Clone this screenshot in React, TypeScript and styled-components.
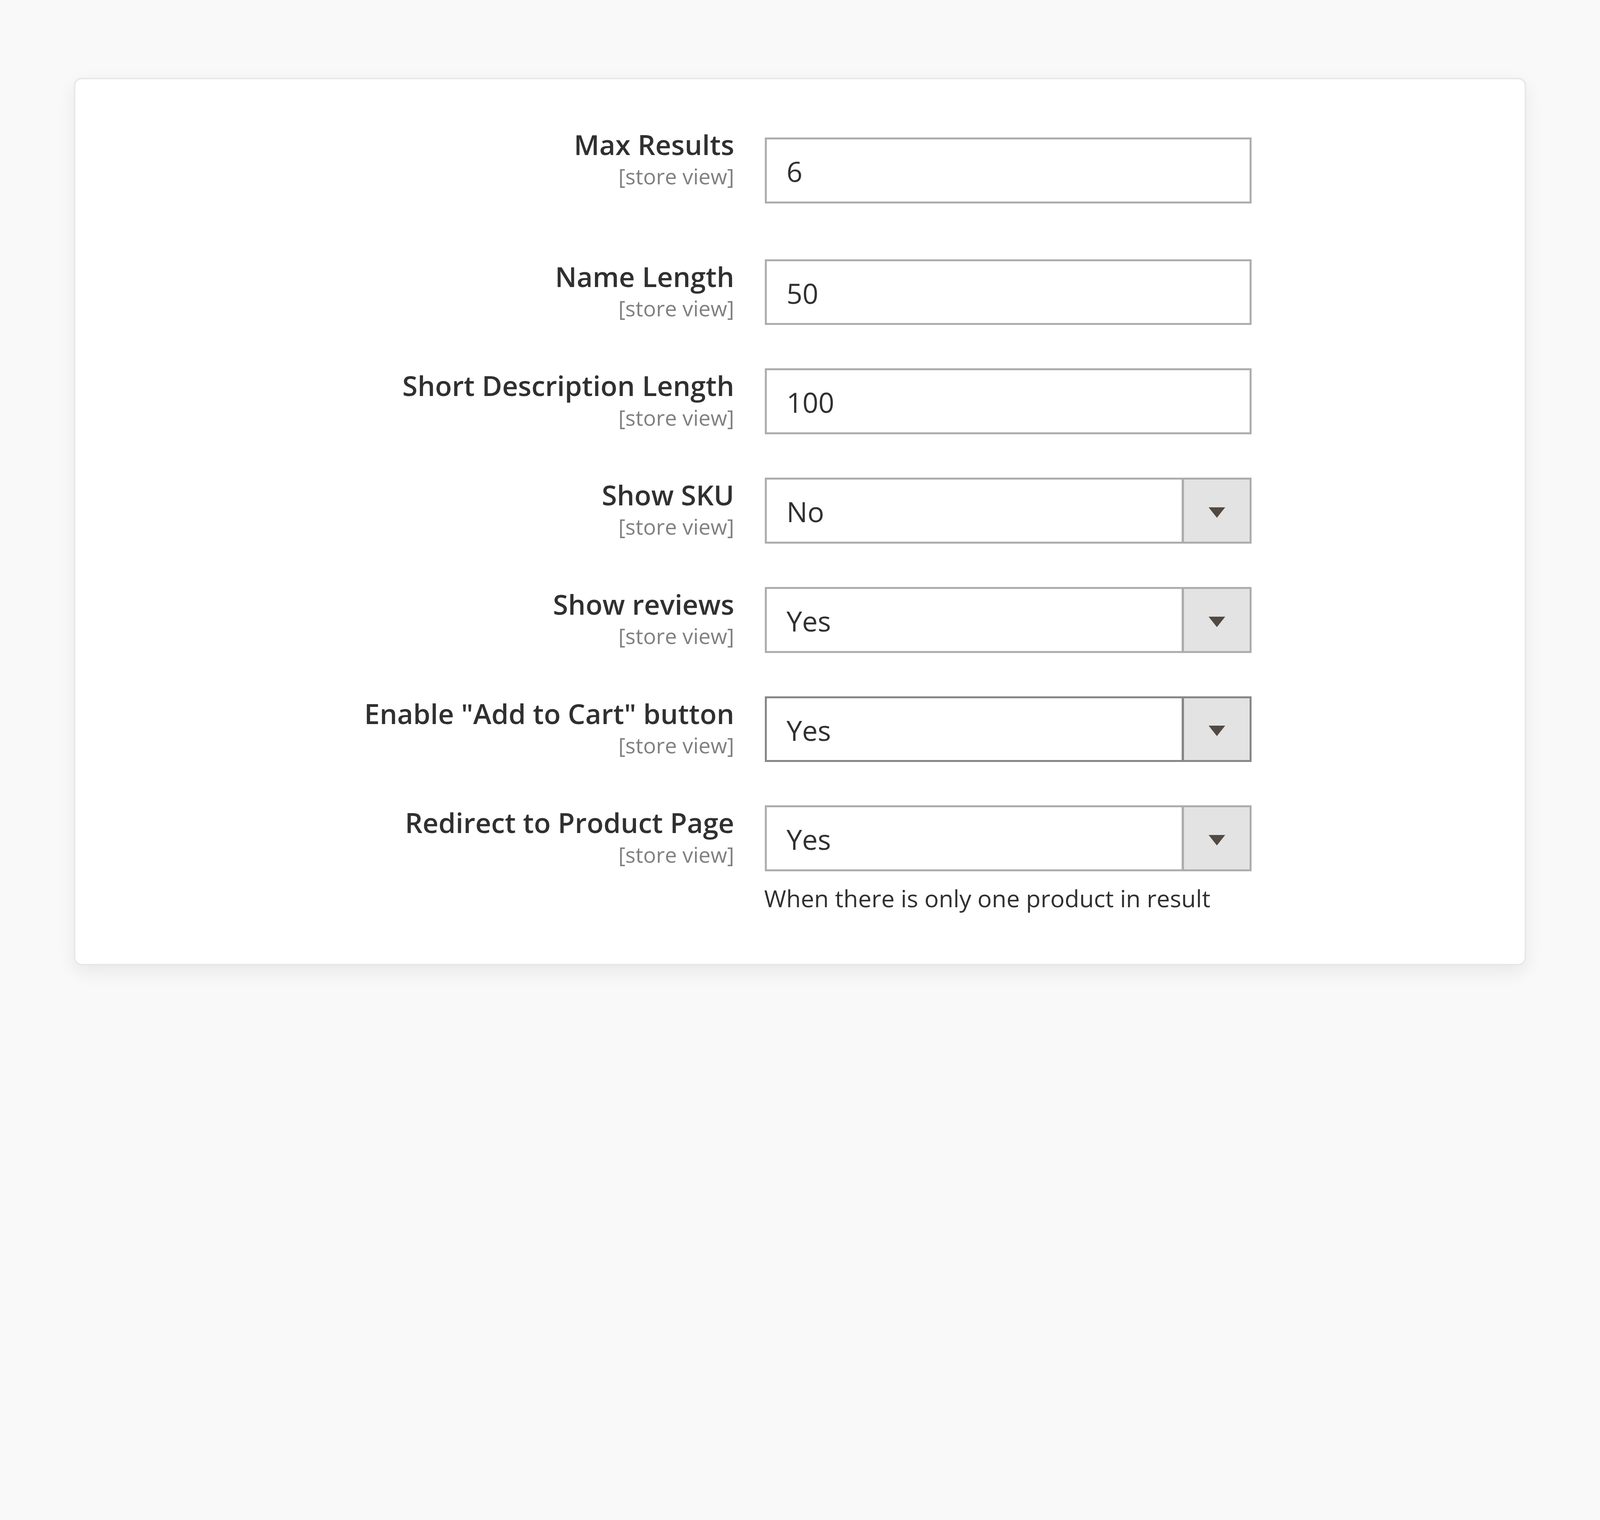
import styled, { createGlobalStyle } from 'styled-components'

// all sizes are given in pixels of the 5973px wide frame and scaled to the viewport
const u = (n: number) => `calc(${n} * 100vw / 5973)`

const GlobalStyle = createGlobalStyle`
	html, body {
		margin: 0;
		padding: 0;
		background: #f9f9f9;
		overflow: hidden;
	}
	body {
		font-family: 'Open Sans', 'Liberation Sans', sans-serif;
		color: #303030;
	}
`
const Page = styled.div`
	padding: ${u(290)} ${u(275)};
	height: ${u(3892)};
	box-sizing: border-box;
`
const Card = styled.section`
	background: #ffffff;
	border: ${u(7)} solid #e8e8e8;
	border-radius: ${u(30)};
	box-shadow: 0 ${u(24)} ${u(70)} rgba(0, 0, 0, 0.07);
	padding: ${u(180)} 0 ${u(188)} 0;
`
const Field = styled.div<{ $first?: boolean }>`
	display: grid;
	grid-template-columns: ${u(2460)} ${u(1818)};
	column-gap: ${u(114)};
	align-items: start;
	margin-bottom: ${({ $first }) => ($first ? u(208) : u(162))};
	&:last-child {
		margin-bottom: 0;
	}
`
const LabelCol = styled.div`
	text-align: right;
	padding-right: 0;
`
const Label = styled.label`
	display: block;
	font-size: ${u(103)};
	line-height: ${u(130)};
	font-weight: 600;
	color: #303030;
	white-space: nowrap;
`
const Scope = styled.span`
	display: block;
	font-size: ${u(80)};
	line-height: ${u(105)};
	color: #808080;
`
const Control = styled.div<{ $first?: boolean }>`
	padding-top: ${({ $first }) => ($first ? u(38) : '0')};
`
const TextInput = styled.input`
	display: block;
	width: 100%;
	height: ${u(246)};
	box-sizing: border-box;
	border: ${u(8)} solid #adadad;
	border-radius: 0;
	padding: ${u(6)} ${u(74)} 0;
	margin: 0;
	font-family: 'Open Sans', 'Liberation Sans', sans-serif;
	font-size: ${u(104)};
	color: #303030;
	background: #ffffff;
	outline: none;
`
const SelectBox = styled.div<{ $active?: boolean }>`
	display: flex;
	height: ${u(246)};
	box-sizing: border-box;
	border: ${u(8)} solid ${({ $active }) => ($active ? '#878787' : '#adadad')};
	background: #ffffff;
`
const Select = styled.select`
	flex: 1;
	min-width: 0;
	height: 100%;
	appearance: none;
	-webkit-appearance: none;
	border: none;
	border-radius: 0;
	background: transparent;
	padding: ${u(6)} ${u(74)} 0;
	margin: 0;
	font-family: 'Open Sans', 'Liberation Sans', sans-serif;
	font-size: ${u(104)};
	color: #303030;
	outline: none;
`
const ArrowButton = styled.div<{ $active?: boolean }>`
	width: ${u(254)};
	flex: none;
	background: #e3e3e3;
	border-left: ${u(9)} solid ${({ $active }) => ($active ? '#878787' : '#adadad')};
	display: flex;
	align-items: center;
	justify-content: center;
	padding-top: ${u(14)};
	box-sizing: border-box;
	svg {
		width: ${u(62)};
		height: ${u(39)};
	}
`
const Note = styled.p`
	margin: ${u(44)} 0 0 ${u(-2)};
	font-size: ${u(89)};
	line-height: ${u(113)};
	color: #303030;
	white-space: nowrap;
`

const Arrow = () => (
	<svg viewBox='0 0 62 39'>
		<polygon points='0,0 62,0 31,39' fill='#514943' />
	</svg>
)

type Item = {
	label: string
	kind: 'text' | 'select'
	value: string
	active?: boolean
	note?: string
}

const items: Item[] = [
	{ label: 'Max Results', kind: 'text', value: '6' },
	{ label: 'Name Length', kind: 'text', value: '50' },
	{ label: 'Short Description Length', kind: 'text', value: '100' },
	{ label: 'Show SKU', kind: 'select', value: 'No' },
	{ label: 'Show reviews', kind: 'select', value: 'Yes' },
	{ label: 'Enable "Add to Cart" button', kind: 'select', value: 'Yes', active: true },
	{
		label: 'Redirect to Product Page',
		kind: 'select',
		value: 'Yes',
		note: 'When there is only one product in result',
	},
]

const App: React.FC = () => {
	return (
		<Page>
			<GlobalStyle />
			<Card>
				{items.map((item, i) => (
					<Field key={item.label} $first={i === 0}>
						<LabelCol>
							<Label>{item.label}</Label>
							<Scope>[store view]</Scope>
						</LabelCol>
						<Control $first={i === 0}>
							{item.kind === 'text' ? (
								<TextInput type='text' defaultValue={item.value} readOnly />
							) : (
								<SelectBox $active={item.active}>
									<Select defaultValue={item.value}>
										<option value='Yes'>Yes</option>
										<option value='No'>No</option>
									</Select>
									<ArrowButton $active={item.active}>
										<Arrow />
									</ArrowButton>
								</SelectBox>
							)}
							{item.note && <Note>{item.note}</Note>}
						</Control>
					</Field>
				))}
			</Card>
		</Page>
	)
}
export default App
